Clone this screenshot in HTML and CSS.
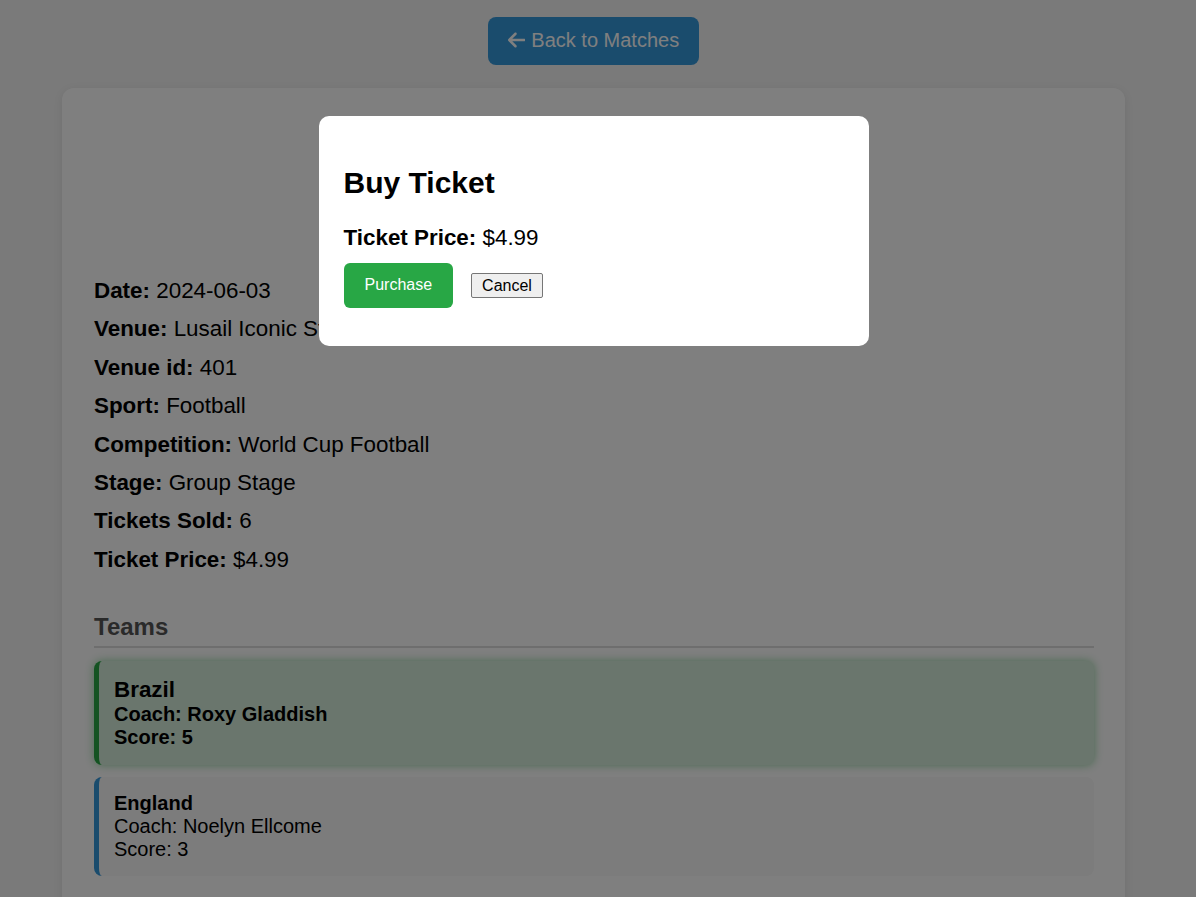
FILE: index.html
```html
<!DOCTYPE html>
<html lang="en">
<head>
<meta charset="utf-8">
<title>Match Details</title>
<link rel="stylesheet" href="styles.css">
</head>
<body class="modal-open">
  <div class="page">
    <div class="top-bar">
      <button class="back-btn" type="button">
        <svg class="back-icon" viewBox="0 0 448 512" aria-hidden="true"><path d="M9.4 233.4c-12.5 12.5-12.5 32.8 0 45.3l160 160c12.5 12.5 32.8 12.5 45.3 0s12.5-32.8 0-45.3L109.2 288 416 288c17.7 0 32-14.3 32-32s-14.3-32-32-32l-306.7 0L214.6 118.6c12.5-12.5 12.5-32.8 0-45.3s-32.8-12.5-45.3 0l-160 160z"/></svg>
        <span>Back to Matches</span>
      </button>
    </div>

    <main class="match-card">
      <header class="match-header">
        <h1 class="match-title">Brazil vs England</h1>
        <button class="buy-btn" type="button">Buy Ticket</button>
      </header>

      <section class="details">
        <p class="detail"><strong>Date:</strong> 2024-06-03</p>
        <p class="detail"><strong>Venue:</strong> Lusail Iconic Stadium</p>
        <p class="detail"><strong>Venue id:</strong> 401</p>
        <p class="detail"><strong>Sport:</strong> Football</p>
        <p class="detail"><strong>Competition:</strong> World Cup Football</p>
        <p class="detail"><strong>Stage:</strong> Group Stage</p>
        <p class="detail"><strong>Tickets Sold:</strong> 6</p>
        <p class="detail"><strong>Ticket Price:</strong> $4.99</p>
      </section>

      <section class="teams">
        <h3 class="teams-title">Teams</h3>
        <div class="team team-winner">
          <div class="team-name">Brazil</div>
          <div class="team-line">Coach: Roxy Gladdish</div>
          <div class="team-line">Score: 5</div>
        </div>
        <div class="team team-other">
          <div class="team-name">England</div>
          <div class="team-line">Coach: Noelyn Ellcome</div>
          <div class="team-line">Score: 3</div>
        </div>
      </section>
    </main>
  </div>

  <div class="overlay">
    <div class="modal">
      <h2 class="modal-title">Buy Ticket</h2>
      <p class="modal-price"><strong>Ticket Price:</strong> $4.99</p>
      <div class="modal-actions">
        <button class="purchase-btn" type="button">Purchase</button>
        <button class="cancel-btn" type="button">Cancel</button>
      </div>
    </div>
  </div>
</body>
</html>
```

FILE: styles.css
```css
* {
  box-sizing: border-box;
}

html, body {
  margin: 0;
}

body {
  background: #f4f4f4;
  font-family: "Liberation Sans", Arial, sans-serif;
  color: #000;
}

body.modal-open {
  overflow: hidden;
  padding-right: 9px;
}

.page {
  padding-top: 17px;
}

.top-bar {
  display: flex;
  justify-content: center;
  margin-bottom: 23px;
}

.back-btn {
  display: flex;
  align-items: center;
  gap: 6px;
  background: #3498db;
  color: #fff;
  border: none;
  border-radius: 8px;
  padding: 11px 20px 13px;
  font-family: "Liberation Sans", Arial, sans-serif;
  font-size: 20px;
  line-height: 24px;
}

.back-icon {
  width: 17.5px;
  height: 20px;
  fill: currentColor;
}

.match-card {
  width: 1063px;
  margin: 0 auto;
  background: #fff;
  border-radius: 12px;
  box-shadow: 0 2px 10px rgba(0, 0, 0, 0.08);
  padding: 32px 31px 32px 32px;
}

.match-header {
  display: flex;
  flex-direction: column;
  align-items: center;
  gap: 16px;
  padding-top: 20px;
  margin-bottom: 35px;
}

.match-title {
  margin: 0;
  font-size: 32px;
  line-height: 37px;
}

.buy-btn {
  height: 44px;
  padding: 0 20px;
  border: none;
  border-radius: 6px;
  background: #28a745;
  color: #fff;
  font-family: inherit;
  font-size: 16px;
}

.details {
  display: flex;
  flex-direction: column;
}

.detail {
  margin: 0;
  font-size: 22.4px;
  line-height: 38.4px;
}

.teams-title {
  margin: 34px 0 13px;
  padding-bottom: 5px;
  border-bottom: 2px solid #dcdcdc;
  font-size: 24px;
  line-height: 27.6px;
  color: #555;
}

.team {
  border-left: 5px solid #3498db;
  border-radius: 8px;
  padding: 15px;
  margin-bottom: 12px;
  font-size: 20px;
  line-height: 23px;
}

.team-name {
  font-weight: bold;
}

.team-other {
  background: #f8f8f8;
  border-left-color: #3498db;
}

.team-winner {
  background: #d4edda;
  border-left-color: #28a745;
  box-shadow: 0 0 10px rgba(40, 167, 69, 0.5);
  font-weight: bold;
  padding: 16px 15px;
}

.team-winner .team-name {
  font-size: 22.4px;
  line-height: 25.76px;
}

.overlay {
  position: fixed;
  inset: 0;
  background: rgba(0, 0, 0, 0.5);
  display: flex;
  justify-content: center;
  align-items: flex-start;
  padding: 116px 9px 0 0;
}

.modal {
  width: 550px;
  background: #fff;
  border-radius: 10px;
  padding: 25px;
  color: #000;
}

.modal-title {
  margin: 25px 0 24px;
  font-size: 30px;
  line-height: 34.5px;
}

.modal-price {
  margin: 0 0 13px;
  font-size: 22.4px;
  line-height: 25.76px;
}

.modal-actions {
  display: flex;
  align-items: center;
  gap: 18px;
  margin-bottom: 13px;
}

.purchase-btn {
  height: 44.4px;
  padding: 0 21px;
  border: none;
  border-radius: 6px;
  background: #28a745;
  color: #fff;
  font-family: "Liberation Sans", Arial, sans-serif;
  font-size: 16px;
}

.cancel-btn {
  height: 25px;
  padding: 0 10px;
  border: 1px solid #767676;
  border-radius: 2px;
  background: #efefef;
  color: #000;
  font-family: "Liberation Sans", Arial, sans-serif;
  font-size: 16px;
  line-height: 19px;
}
```
